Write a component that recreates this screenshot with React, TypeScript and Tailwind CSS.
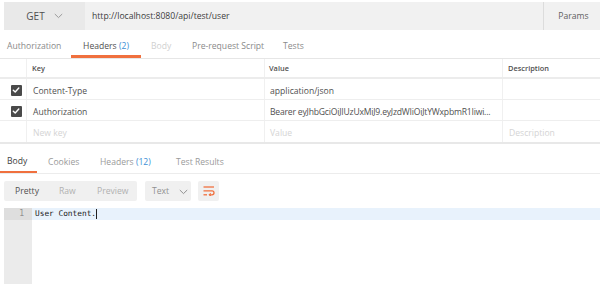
import React from "react";

const Check = () => (
  <div className="w-[11px] h-[11px] rounded-[1px] bg-[#4a4a4a] flex items-center justify-center">
    <svg width="8" height="8" viewBox="0 0 8 8">
      <path d="M1.3 4.2 L3.2 6 L6.8 2" stroke="#fff" strokeWidth="1.4" fill="none" strokeLinecap="round" strokeLinejoin="round" />
    </svg>
  </div>
);

const Chevron = ({ color = "#9a9a9a" }: { color?: string }) => (
  <svg width="9" height="6" viewBox="0 0 9 6">
    <path d="M0.8 1 L4.5 4.6 L8.2 1" stroke={color} strokeWidth="1" fill="none" />
  </svg>
);

export default function App() {
  const font = { fontFamily: '"Open Sans", "Noto Sans", sans-serif' };
  const mono = { fontFamily: '"DejaVu Sans Mono", monospace' };
  return (
    <div className="w-[600px] h-[284px] bg-white overflow-hidden text-[#505050]" style={font}>
      {/* URL bar */}
      <div className="flex h-[28px] mt-[2px] ml-[4px] text-[8.6px]">
        <div className="w-[81px] bg-[#e9e9e9] flex items-center justify-center gap-[9px] text-[10px] text-[#505050]">
          <span>GET</span>
          <Chevron />
        </div>
        <div className="flex-1 bg-[#f1f1f1] flex items-center pl-[7px] text-[#404040]">
          http://localhost:8080/api/test/user
        </div>
        <div className="w-[57px] bg-[#f1f1f1] border-l border-[#dcdcdc] flex items-center justify-center pl-[3px] text-[#606060]">
          Params
        </div>
      </div>

      {/* Request tabs */}
      <div className="flex h-[29px] items-end border-b border-[#e6e6e6] text-[8.6px]">
        <div className="pl-[7px] w-[71px] h-full flex items-center pt-[5px] text-[#8a8a8a]">Authorization</div>
        <div className="w-[70px] h-full flex items-center justify-center border-b-[3px] border-[#f0703e] pt-[7px] text-[#505050]">
          Headers&nbsp;<span className="text-[#3d8fd6]">(2)</span>
        </div>
        <div className="ml-[10px] w-[30px] h-full flex items-center pt-[5px] text-[#d0d0d0]">Body</div>
        <div className="ml-[11px] w-[91px] h-full flex items-center pt-[5px] text-[#8a8a8a]">Pre-request Script</div>
        <div className="h-full flex items-center pt-[5px] text-[#8a8a8a]">Tests</div>
      </div>

      {/* Headers table */}
      <div className="text-[8.6px] border-b-[2px] border-[#e8e8e8]">
        <div className="flex h-[20px] border-b-[2px] border-[#ececec] font-semibold text-[7.4px] text-[#505050]">
          <div className="w-[26px]" />
          <div className="w-[238px] border-l border-[#f0f0f0] pl-[5px] pt-[2px] flex items-center">Key</div>
          <div className="w-[238px] border-l border-[#f0f0f0] pl-[4px] pt-[2px] flex items-center">Value</div>
          <div className="flex-1 border-l border-[#f0f0f0] pl-[5px] pt-[2px] flex items-center">Description</div>
        </div>
        <div className="flex h-[21px] border-b border-[#eeeeee]">
          <div className="w-[26px] flex items-center justify-center pl-[8px] pr-[2px] pt-[2px]"><Check /></div>
          <div className="w-[238px] border-l border-[#f0f0f0] pl-[6px] pt-[4px] flex items-center">Content-Type</div>
          <div className="w-[238px] border-l border-[#f0f0f0] pl-[5px] pt-[4px] flex items-center">application/json</div>
          <div className="flex-1 border-l border-[#f0f0f0]" />
        </div>
        <div className="flex h-[21px] border-b border-[#eeeeee]">
          <div className="w-[26px] flex items-center justify-center pl-[8px] pr-[2px] pt-[2px]"><Check /></div>
          <div className="w-[238px] border-l border-[#f0f0f0] pl-[6px] pt-[4px] flex items-center">Authorization</div>
          <div className="w-[238px] border-l border-[#f0f0f0] pl-[5px] pt-[4px] flex items-center whitespace-nowrap tracking-[-0.2px]">
            Bearer eyJhbGciOiJIUzUxMiJ9.eyJzdWIiOiJtYWxpbmR1Iiwi...
          </div>
          <div className="flex-1 border-l border-[#f0f0f0]" />
        </div>
        <div className="flex h-[21px] text-[#d4d4d4]">
          <div className="w-[26px]" />
          <div className="w-[238px] border-l border-[#f0f0f0] pl-[6px] pt-[4px] flex items-center">New key</div>
          <div className="w-[238px] border-l border-[#f0f0f0] pl-[5px] pt-[4px] flex items-center">Value</div>
          <div className="flex-1 border-l border-[#f0f0f0] pl-[6px] pt-[4px] flex items-center">Description</div>
        </div>
      </div>

      {/* Response tabs */}
      <div className="flex h-[28px] mt-[2px] border-b border-[#ececec] text-[8.6px]">
        <div className="w-[37px] h-full flex items-center pl-[7px] border-b-[2px] border-[#f0703e] pt-[6px] text-[#404040]">Body</div>
        <div className="ml-[11px] w-[52px] h-full flex items-center pt-[5px] text-[#9a9a9a]">Cookies</div>
        <div className="w-[76px] h-full flex items-center pt-[5px] text-[#9a9a9a]">
          Headers&nbsp;<span className="text-[#3d8fd6]">(12)</span>
        </div>
        <div className="h-full flex items-center pt-[5px] text-[#9a9a9a]">Test Results</div>
      </div>

      {/* Toolbar */}
      <div className="flex items-center mt-[7px] ml-[4px] h-[20px] text-[8.6px]">
        <div className="w-[133px] h-full bg-[#f0f0f0] rounded-[2px] flex items-center pt-[1px]">
          <span className="pl-[11px] w-[55px] text-[#505050]">Pretty</span>
          <span className="w-[38px] text-[#b0b0b0]">Raw</span>
          <span className="text-[#b0b0b0]">Preview</span>
        </div>
        <div className="ml-[8px] w-[46px] h-full bg-[#f0f0f0] rounded-[2px] flex items-center pl-[7px] gap-[10px] pt-[1px] text-[#909090]">
          <span>Text</span>
          <Chevron color="#909090" />
        </div>
        <div className="ml-[7px] w-[21px] h-full bg-[#f0f0f0] rounded-[2px] flex items-center justify-center">
          <svg width="12" height="10" viewBox="0 0 12 10">
            <path d="M0.5 1 H11" stroke="#f0703e" strokeWidth="1.3" />
            <path d="M0.5 4.8 H9 a2 2 0 0 1 0 4 H6.5" stroke="#f0703e" strokeWidth="1.3" fill="none" />
            <path d="M7.8 7.4 L6.3 8.8 L7.8 10" stroke="#f0703e" strokeWidth="1.1" fill="none" />
            <path d="M0.5 8.8 H4" stroke="#f0703e" strokeWidth="1.3" />
          </svg>
        </div>
      </div>

      {/* Editor */}
      <div className="flex mt-[7px] ml-[4px] h-[80px]">
        <div className="w-[28px] bg-[#ebebeb] h-full">
          <div className="h-[12px] bg-[#dedede] text-[8px] text-[#909090] flex items-center justify-end pr-[8px]" style={mono}>1</div>
        </div>
        <div className="flex-1">
          <div className="h-[12px] bg-[#e8f2fc] flex items-center pl-[3px] text-[7.8px] text-[#202020]" style={mono}>
            User Content.<span className="inline-block w-[1px] h-[10px] bg-[#202020]" />
          </div>
        </div>
      </div>
    </div>
  );
}
